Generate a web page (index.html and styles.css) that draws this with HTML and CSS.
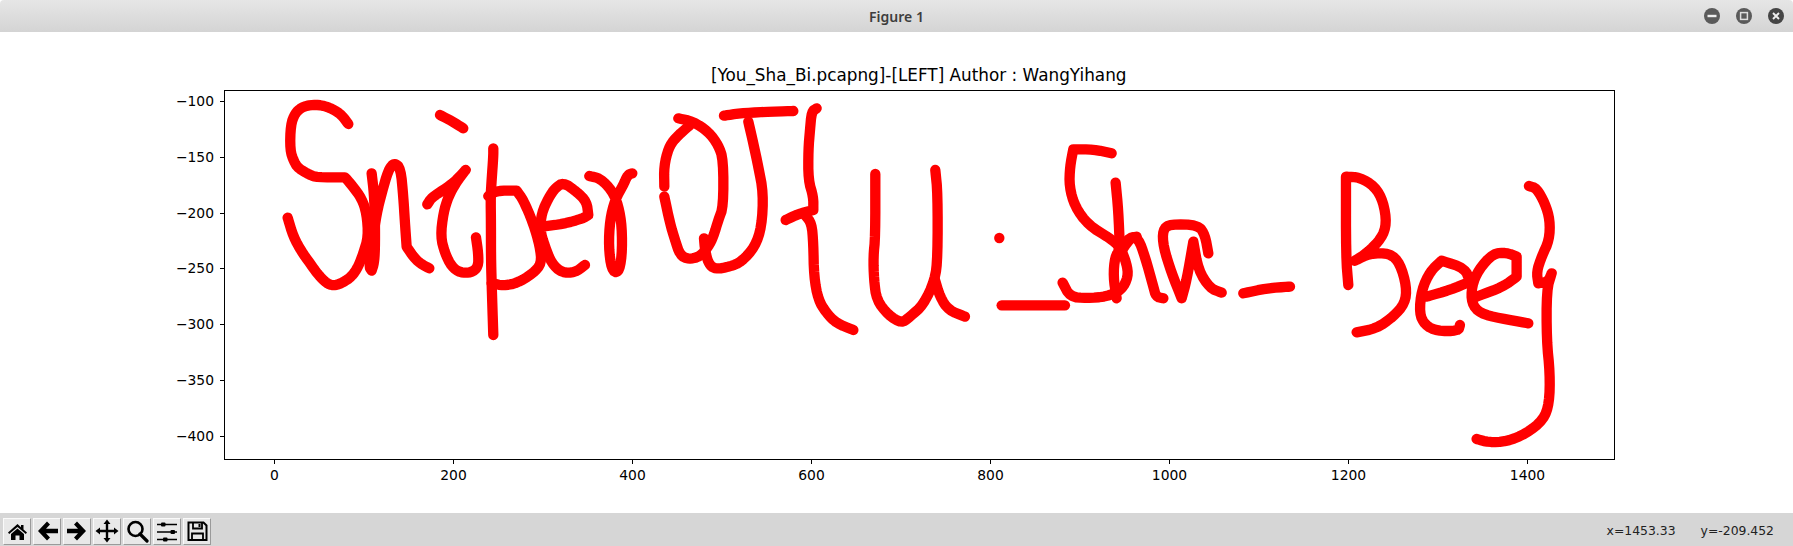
FILE: index.html
```html
<!DOCTYPE html>
<html>
<head>
  <title>Figure 1</title>
  <link rel="stylesheet" href="styles.css">
</head>
<body>
<div class="window">
  <div class="titlebar">
    <span class="title">Figure 1</span>
    <div class="window-controls">
      <span class="win-btn">
        <svg width="16" height="16" viewBox="0 0 16 16"><circle cx="8" cy="8" r="8" fill="#5a5a5a"/><rect x="3.5" y="6.8" width="9" height="2.4" fill="#eee"/></svg>
      </span>
      <span class="win-btn">
        <svg width="16" height="16" viewBox="0 0 16 16"><circle cx="8" cy="8" r="8" fill="#5a5a5a"/><rect x="4.6" y="4.6" width="6.8" height="6.8" fill="none" stroke="#ddd" stroke-width="1.5"/></svg>
      </span>
      <span class="win-btn">
        <svg width="16" height="16" viewBox="0 0 16 16"><circle cx="8" cy="8" r="8" fill="#454545"/><path d="M5 5l6 6M11 5l-6 6" stroke="#eee" stroke-width="1.9"/></svg>
      </span>
    </div>
  </div>

  <svg class="figure" width="1793" height="481" viewBox="0 32 1793 481">
    <text class="plot-title" x="918.700" y="81" text-anchor="middle">[You_Sha_Bi.pcapng]-[LEFT] Author : WangYihang</text>

    <!-- axes frame -->
    <rect x="224.500" y="90.500" width="1390" height="369" fill="none" stroke="#000" stroke-width="1"/>

    <!-- y ticks -->
    <g stroke="#000" stroke-width="1">
      <path d="M220 101.500h4M220 157.500h4M220 213.500h4M220 268.500h4M220 324.500h4M220 380.500h4M220 436.500h4"/>
      <path d="M274.500 460v4M453.500 460v4M632.500 460v4M811.500 460v4M990.500 460v4M1169.500 460v4M1348.500 460v4M1527.500 460v4"/>
    </g>
    <g class="tick" text-anchor="end">
      <text x="214" y="106">−100</text>
      <text x="214" y="162">−150</text>
      <text x="214" y="218">−200</text>
      <text x="214" y="273">−250</text>
      <text x="214" y="329">−300</text>
      <text x="214" y="385">−350</text>
      <text x="214" y="441">−400</text>
    </g>
    <g class="tick" text-anchor="middle">
      <text x="274.500" y="480">0</text>
      <text x="453.500" y="480">200</text>
      <text x="632.500" y="480">400</text>
      <text x="811.500" y="480">600</text>
      <text x="990.500" y="480">800</text>
      <text x="1169.500" y="480">1000</text>
      <text x="1348.500" y="480">1200</text>
      <text x="1527.500" y="480">1400</text>
    </g>

    <!-- handwriting, 1/3 px units per group. a point written twice stays a sharp corner -->
    <g class="ink" transform="translate(150 50) scale(.3333)">
      <polyline points="595,222 575,195 550,178 515,165 480,165 455,172 435,190 422,225 420,300 432,335 445,355 480,375 500,382 585,382 585,382 605,405 635,445 650,490 655,560 640,610 625,650 605,680 575,700 550,707 530,700 505,675 480,640 455,605 430,560 413,503"/>
      <polyline points="665,370 672,430 675,510 675,600 672,640 665,662 665,662 657,650 670,560 680,490 695,430 715,360 733,338 752,355 760,440 765,520 770,590 770,590 790,620 810,640 838,655"/>
      <polyline points="870,195 905,213 940,235"/>
      <polyline points="832,463 845,443 880,420 915,395 947,360 947,360 920,395 895,440 880,490 872,560 885,610 905,650 930,668 965,668 985,650 985,610 978,562"/>
      <polyline points="1030,295 1030,320 1025,390 1022,440 1023,520 1023,620 1025,700 1030,855"/>
      <polyline points="1015,438 1040,422 1100,422 1100,422 1120,450 1150,520 1170,590 1175,640 1150,670 1100,700 1060,707 1025,700"/>
      <polyline points="1175,530 1240,522 1300,505 1315,495 1315,495 1310,455 1280,425 1240,397 1215,415 1195,445 1175,490 1170,540 1185,590 1205,640 1235,668 1275,668 1305,645"/>
      <polyline points="1318,378 1350,385 1385,420 1405,465 1416,530 1416,620 1405,670 1385,660 1376,590 1380,510 1395,450 1420,405 1433,375 1447,370"/>
    </g>
    <g class="ink" transform="translate(640 50) scale(.3333)">
      <polyline points="115,205 160,215 205,245 235,285 250,330 250,470 235,510 220,560 205,590 180,620 145,628 120,615 105,570 90,520 73,440"/>
      <polyline points="73,410 72,350 85,295 105,265 150,225"/>
      <polyline points="192,565 195,600 205,640 225,658 270,650 305,635 345,590 365,530 370,430 355,350 340,280 325,215"/>
      <polyline points="252,197 300,190 370,186 460,183"/>
      <polyline points="530,175 515,185 510,240 505,300 505,390 520,440 520,480 520,480 475,492 437,510"/>
      <polyline points="495,495 515,520 520,580 522,680 535,750 560,790 590,820 640,840"/>
      <polyline points="706,372 706,560 700,620 702,690 710,750 745,795 785,820 810,800 850,765 885,690 893,620 893,430 886,360"/>
      <polyline points="885,690 900,740 925,780 975,800"/>
      <polyline points="1078,564 1078.100,564"/>
      <polyline points="1085,766 1275,766"/>
      <polyline points="1415,310 1360,298 1300,298 1300,298 1290,350 1288,410 1305,470 1345,525 1410,565 1440,590 1460,640 1465,680 1445,720 1400,740 1340,745 1290,740 1268,698"/>
      <polyline points="1427,398 1435,480 1440,600 1425,620 1420,680 1430,745"/>
      <polyline points="1440,610 1470,565 1490,560"/>
    </g>
    <g class="ink" transform="translate(1130 140) scale(.3333)">
      <polyline points="-30,330 0,290 25,295 45,350 70,440 78,470 100,475"/>
      <polyline points="235,340 225,285 205,255 120,252 98,270 100,320 125,400 155,475 155,475 170,420 190,305 190,305 205,390 240,445 275,458"/>
      <polyline points="340,460 410,445 480,440"/>
      <polyline points="655,435 648,350 648,110 648,110 690,112 735,140 760,185 770,250 755,295 710,340 675,362 675,362 720,340 780,340 810,370 830,440 825,490 790,530 740,565 680,577"/>
      <polyline points="890,470 960,450 1020,425 1020,425 1005,385 935,362 935,362 900,395 875,450 868,520 885,555 920,573 985,573 990,555"/>
      <polyline points="1195,550 1110,535 1050,520 1025,490 1025,440 1045,390 1090,340 1130,338 1160,350 1160,350 1160,410 1160,410 1120,440 1040,470"/>
      <polyline points="1197,138 1220,145 1245,190 1260,240 1258,300 1235,350 1220,395 1225,430 1225,430 1255,425 1265,400 1265,400 1250,450 1250,600 1260,700 1258,790 1240,840 1190,880 1130,905 1075,907 1040,897"/>
    </g>
  </svg>

  <div class="toolbar">
    <div class="tools">
      <button class="tool" type="button">
        <svg width="24" height="24" viewBox="0 0 24 24"><path d="M12.500 5 3 13.500l1.200 1.400L12.500 8l8.300 6.900 1.200-1.400-3.500-3.100V6H16v2.300z"/><path d="M12.500 9.500 6 15v6h4.500v-4.500h4V21H19v-6z"/></svg>
      </button>
      <button class="tool" type="button">
        <svg width="24" height="24" viewBox="0 0 24 24"><path d="M12 2.500 3 12l9 9.500 3-3-4-4.200H23V9.700H11l4-4.200z"/></svg>
      </button>
      <button class="tool" type="button">
        <svg width="24" height="24" viewBox="0 0 24 24"><path d="M12 2.500 21 12l-9 9.500-3-3 4-4.200H2V9.700H13L9 5.500z"/></svg>
      </button>
      <button class="tool" type="button">
        <svg width="24" height="24" viewBox="0 0 24 24"><path d="M12 .5 15.500 5H13.200V10.800H19V8.500L23.500 12 19 15.500V13.200H13.200V19H15.500L12 23.500 8.500 19H10.800V13.200H5V15.500L.5 12 5 8.500V10.800H10.800V5H8.500z"/></svg>
      </button>
      <button class="tool" type="button">
        <svg width="24" height="24" viewBox="0 0 24 24"><circle cx="10.500" cy="10" r="7" fill="none" stroke="#000" stroke-width="2.600"/><path d="M15 15 22 22" stroke="#000" stroke-width="3.200" stroke-linecap="round"/></svg>
      </button>
      <button class="tool" type="button">
        <svg width="24" height="24" viewBox="0 0 24 24"><path d="M2 5.500h20M2 13h20M2 20.500h20" stroke="#000" stroke-width="1.600"/><rect x="6" y="3.500" width="4.500" height="4" rx="1"/><rect x="15.500" y="11" width="4.500" height="4" rx="1"/><rect x="8" y="18.500" width="4.500" height="4" rx="1"/></svg>
      </button>
      <button class="tool" type="button">
        <svg width="24" height="24" viewBox="0 0 24 24"><path d="M3.500 3.500H18.500L21.500 6.500V21H3.500z" fill="none" stroke="#000" stroke-width="2"/><path d="M8 4V9.500H17V4" fill="none" stroke="#000" stroke-width="1.800"/><rect x="13.500" y="5" width="2" height="3"/><path d="M7 21V14.500H18V21" fill="none" stroke="#000" stroke-width="1.800"/></svg>
      </button>
    </div>
    <div class="coords">
      <span>x=1453.33</span>
      <span>y=-209.452</span>
    </div>
  </div>
</div>
<script src="script.js"></script>
</body>
</html>
```

FILE: styles.css
```css
html, body {
  margin: 0;
  padding: 0;
  background-color: #fff;
}

.window {
  width: 1793px;
  height: 546px;
  display: flex;
  flex-direction: column;
  overflow: hidden;
  font-family: "DejaVu Sans", sans-serif;
}

/* title bar */
.titlebar {
  height: 32px;
  flex: none;
  display: flex;
  align-items: center;
  justify-content: center;
  position: relative;
  background: linear-gradient(#e6e6e6, #d4d4d4);
  border-radius: 4px 4px 0 0;
}

.title {
  font-family: "Noto Sans", sans-serif;
  font-size: 14px;
  font-weight: 600;
  color: #3d3d3d;
}

.window-controls {
  position: absolute;
  right: 9px;
  top: 8px;
  display: flex;
  gap: 16px;
}

.win-btn {
  display: block;
  width: 16px;
  height: 16px;
}

/* plot */
.figure {
  display: block;
  flex: none;
}

.plot-title {
  font-family: "DejaVu Sans", sans-serif;
  font-size: 16.83px;
  fill: #000;
}

.tick {
  font-family: "DejaVu Sans", sans-serif;
  font-size: 13.89px;
  fill: #000;
}

.ink polyline {
  fill: none;
  stroke: #f00;
  stroke-width: 31;
  stroke-linecap: round;
  stroke-linejoin: round;
}

/* toolbar */
.toolbar {
  flex: 1;
  display: flex;
  align-items: center;
  justify-content: space-between;
  background-color: #d6d6d6;
  padding: 0 19px 0 3px;
}

.tools {
  display: flex;
  gap: 2px;
  padding-top: 3px;
}

.tool {
  width: 28px;
  height: 27px;
  padding: 0;
  display: flex;
  align-items: center;
  justify-content: center;
  background-color: #e8e8e8;
  border: 1px solid;
  border-color: #fafafa #9a9a9a #9a9a9a #fafafa;
}

.coords {
  display: flex;
  gap: 25px;
  font-size: 12.4px;
  color: #222;
  padding-top: 2px;
}
```

FILE: script.js
```js
// round off the hand-drawn strokes (corner cutting, keeps both end points)
function smooth(points) {
  const out = [points[0]];
  for (let i = 0; i < points.length - 1; i++) {
    const [ax, ay] = points[i];
    const [bx, by] = points[i + 1];
    out.push([ax * 0.75 + bx * 0.25, ay * 0.75 + by * 0.25]);
    out.push([ax * 0.25 + bx * 0.75, ay * 0.25 + by * 0.75]);
  }
  out.push(points[points.length - 1]);
  return out;
}

document.querySelectorAll('.ink polyline').forEach(line => {
  let points = line.getAttribute('points').trim().split(/\s+/).map(p => p.split(',').map(Number));
  points = smooth(smooth(points));
  line.setAttribute('points', points.map(p => p.join(',')).join(' '));
});
```
